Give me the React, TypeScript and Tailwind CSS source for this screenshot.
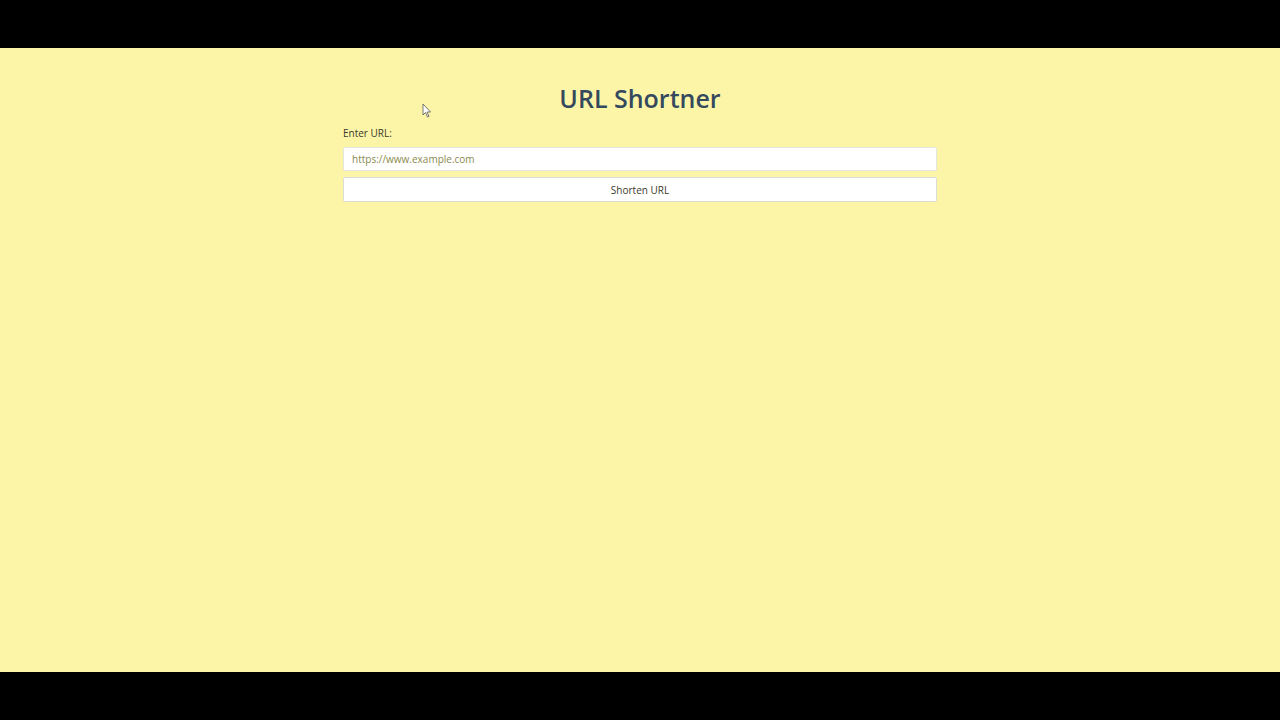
export default function App() {
  return (
    <div className="flex h-[720px] w-[1280px] flex-col bg-black font-['Open_Sans',sans-serif]">
      <div className="h-12 shrink-0" />
      <div className="relative flex flex-1 flex-col items-center bg-[#fcf5a8]">
        <div className="mt-[34px] flex w-[594px] flex-col">
          <h1 className="text-center text-[25px] leading-[32px] font-semibold text-[#34495e]">URL Shortner</h1>
          <label className="mt-[12px] text-[10px] leading-[14px] text-[#3a3a2a]">Enter URL:</label>
          <input
            className="mt-[7px] h-[24px] w-full rounded-[2px] border border-[#e6e6e0] bg-white px-2 text-[10px] text-[#333] outline-none placeholder:text-[#8a8a50]"
            placeholder="https://www.example.com"
          />
          <button className="mt-[6px] h-[25px] w-full rounded-[2px] border border-[#dcdcd6] bg-white pt-px text-[10px] text-[#3a3a2a]">
            Shorten URL
          </button>
        </div>
        <svg className="absolute left-[422px] top-[55px]" width="10" height="15" viewBox="0 0 10 15">
          <path d="M1 1 L1 12 L3.5 9.5 L5.5 14 L7 13.3 L5 9 L8.5 9 Z" fill="#fff" stroke="#555" strokeWidth="0.8" />
        </svg>
      </div>
      <div className="h-12 shrink-0" />
    </div>
  )
}
